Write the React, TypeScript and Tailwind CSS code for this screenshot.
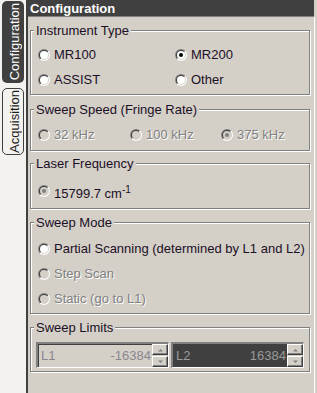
import React, { useId } from "react";

function Radio({ checked = false, disabled = false }: { checked?: boolean; disabled?: boolean }) {
  const id = useId().replace(/:/g, "");
  return (
    <svg width="12" height="12" viewBox="0 0 12 12" className="block shrink-0">
      <defs>
        <linearGradient id={`o${id}`} x1="0" y1="0" x2="1" y2="1">
          <stop offset="0.5" stopColor="#808080" />
          <stop offset="0.5" stopColor="#ffffff" />
        </linearGradient>
        <linearGradient id={`i${id}`} x1="0" y1="0" x2="1" y2="1">
          <stop offset="0.5" stopColor="#404040" />
          <stop offset="0.5" stopColor="#d4d0c8" />
        </linearGradient>
      </defs>
      <circle cx="6" cy="6" r="6" fill={`url(#o${id})`} />
      <circle cx="6" cy="6" r="5" fill={`url(#i${id})`} />
      <circle cx="6" cy="6" r="4" fill={disabled ? "#d4d0c8" : "#ffffff"} />
      {checked && <circle cx="6" cy="6" r="2" fill={disabled ? "#808080" : "#000000"} />}
    </svg>
  );
}

function Option({
  label,
  checked,
  disabled,
}: {
  label: React.ReactNode;
  checked?: boolean;
  disabled?: boolean;
}) {
  return (
    <div className="flex h-[25px] items-center gap-[4px]">
      <Radio checked={checked} disabled={disabled} />
      <span
        className={
          disabled
            ? "whitespace-nowrap text-[#808080] [text-shadow:1px_1px_0_#ffffff]"
            : "whitespace-nowrap text-[#1b0f26]"
        }
      >
        {label}
      </span>
    </div>
  );
}

function Group({
  title,
  className,
  children,
}: {
  title: string;
  className: string;
  children: React.ReactNode;
}) {
  return (
    <div
      className={`ml-[2px] flex w-[280px] flex-col border border-[#808080] shadow-[inset_1px_1px_0_#ffffff,1px_1px_0_#ffffff] ${className}`}
    >
      <div className="-mt-[8px] ml-[3px] self-start bg-[#d4d0c8] px-[2px] text-[13px] leading-[15px] text-[#1b0f26]">
        {title}
      </div>
      {children}
    </div>
  );
}

function SpinBtn({ up }: { up?: boolean }) {
  return (
    <div className="flex h-[11px] w-[16px] items-center justify-center border border-b-[#404040] border-l-white border-r-[#404040] border-t-white bg-[#d4d0c8] shadow-[inset_-1px_-1px_0_#808080]">
      <svg width="7" height="4" viewBox="0 0 7 4" className="block">
        {up ? (
          <path d="M1 3.5 L6 3.5 L3.5 1 Z" fill="#808080" />
        ) : (
          <path d="M1 0.5 L6 0.5 L3.5 3 Z" fill="#808080" />
        )}
      </svg>
    </div>
  );
}

function Spin({ label, value, dark }: { label: string; value: string; dark?: boolean }) {
  return (
    <div className="flex h-[26px] w-[133px] border-b border-l-2 border-r border-t-2 border-b-white border-l-[#808080] border-r-white border-t-[#808080] shadow-[inset_1px_1px_0_#404040]">
      <div
        className={
          dark
            ? "flex flex-1 items-center justify-between bg-[#404040] pl-[3px] pr-[1px] text-[#9a9a9a]"
            : "flex flex-1 items-center justify-between pl-[3px] pr-[1px] text-[#8a8690]"
        }
      >
        <span>{label}</span>
        <span>{value}</span>
      </div>
      <div className="flex w-[16px] flex-col gap-[1px]">
        <SpinBtn up />
        <SpinBtn />
      </div>
    </div>
  );
}

function Tabs() {
  return (
    <div className="flex w-[26px] flex-col items-start bg-[#f4f2ee] pl-[2px] pt-[1px]">
      <div className="flex h-[82px] w-[22px] items-center justify-center rounded-[5px] bg-[#404040] pl-[2px] text-white">
        <span className="rotate-180 whitespace-nowrap text-[13px] leading-[15px] [writing-mode:vertical-rl]">
          Configuration
        </span>
      </div>
      <div className="mt-[5px] flex h-[67px] w-[22px] items-center justify-center rounded-[5px] border border-[#404040] bg-[#f4f2ee] pl-[2px] text-[#1b1b1b]">
        <span className="rotate-180 whitespace-nowrap text-[13px] leading-[15px] [writing-mode:vertical-rl]">
          Acquisition
        </span>
      </div>
    </div>
  );
}

export default function App() {
  return (
    <div className="flex h-[393px] w-[317px] overflow-hidden bg-[#d4d0c8] font-['Liberation_Sans',Arial,sans-serif] text-[13px] leading-[15px]">
      <Tabs />
      <div className="w-[2px] bg-[#404040]" />
      <div className="flex w-[287px] flex-col">
        <div className="h-[17px] w-[286px] border-b border-[#808080] bg-[#404040] pl-[2px] pt-[2px] text-[13px] font-bold leading-[14px] text-white">
          Configuration
        </div>
        <div className="flex flex-1 flex-col border-r border-white">
          <Group title="Instrument Type" className="mt-[13px] h-[65px]">
            <div className="mt-[4px] grid grid-cols-[137px_1fr] pl-[7px]">
              <Option label="MR100" />
              <Option label="MR200" checked />
              <Option label="ASSIST" />
              <Option label="Other" />
            </div>
          </Group>
          <Group title="Sweep Speed (Fringe Rate)" className="mt-[14px] h-[42px]">
            <div className="mt-[5px] grid grid-cols-[92px_91px_1fr] pl-[7px]">
              <Option label="32 kHz" disabled />
              <Option label="100 kHz" disabled />
              <Option label="375 kHz" checked disabled />
            </div>
          </Group>
          <Group title="Laser Frequency" className="mt-[12px] h-[46px]">
            <div className="mt-[7px] flex h-[25px] items-center gap-[4px] pl-[7px]">
              <Radio checked disabled />
              <span className="whitespace-nowrap pt-[6px] text-[#1b0f26]">
                15799.7 cm<sup className="text-[10px] leading-[10px]">-1</sup>
              </span>
            </div>
          </Group>
          <Group title="Sweep Mode" className="mt-[13px] h-[92px]">
            <div className="mt-[6px] flex flex-col pl-[7px]">
              <Option label="Partial Scanning (determined by L1 and L2)" />
              <Option label="Step Scan" disabled />
              <Option label="Static (go to L1)" disabled />
            </div>
          </Group>
          <Group title="Sweep Limits" className="mt-[13px] h-[45px]">
            <div className="mt-[7px] flex gap-[2px] pl-[5px]">
              <Spin label="L1" value="-16384" />
              <Spin label="L2" value="16384" dark />
            </div>
          </Group>
        </div>
      </div>
    </div>
  );
}
